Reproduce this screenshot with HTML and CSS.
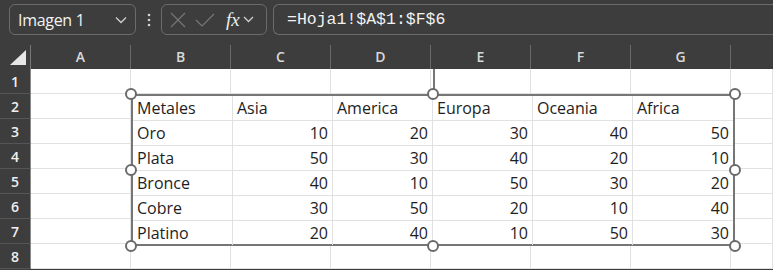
FILE: index.html
```html
<!DOCTYPE html>
<html>
  <head>
    <meta charset="utf-8">
    <title>Imagen 1</title>
    <link rel="stylesheet" href="styles.css">
  </head>
  <body>
    <div class="toolbar">
      <div class="namebox">
        <span class="name">Imagen 1</span>
        <svg class="chev" width="12" height="8" viewBox="0 0 12 8"><path d="M1 1.5 L6 6.5 L11 1.5" fill="none" stroke="#cfcfcf" stroke-width="1.3"/></svg>
      </div>
      <svg class="dots" width="4" height="14" viewBox="0 0 4 14"><circle cx="2" cy="2" r="1.3" fill="#d0d0d0"/><circle cx="2" cy="7" r="1.3" fill="#d0d0d0"/><circle cx="2" cy="12" r="1.3" fill="#d0d0d0"/></svg>
      <div class="fxbox">
        <svg width="16" height="16" viewBox="0 0 16 16"><path d="M1 1 L15 15 M15 1 L1 15" stroke="#777" stroke-width="1.2" fill="none"/></svg>
        <svg width="20" height="14" viewBox="0 0 20 14"><path d="M1 7 L7 13 L19 1" stroke="#777" stroke-width="1.2" fill="none"/></svg>
        <span class="fx">fx</span>
        <svg class="chev" width="11" height="7" viewBox="0 0 11 7"><path d="M1 1 L5.5 5.5 L10 1" fill="none" stroke="#cfcfcf" stroke-width="1.3"/></svg>
      </div>
      <div class="formula">=Hoja1!$A$1:$F$6</div>
    </div>

    <div class="sheet">
      <div class="grid">
        <div class="corner"><svg width="16" height="15" viewBox="0 0 16 15"><path d="M16 0 L16 15 L0 15 Z" fill="#e6e6e6"/></svg></div>
        <div class="colhead">A</div><div class="colhead">B</div><div class="colhead">C</div><div class="colhead">D</div>
        <div class="colhead">E</div><div class="colhead">F</div><div class="colhead">G</div><div class="colhead last"></div>

        <div class="rowhead">1</div><div class="cell"></div><div class="cell"></div><div class="cell"></div><div class="cell"></div><div class="cell"></div><div class="cell"></div><div class="cell"></div><div class="cell"></div>
        <div class="rowhead">2</div><div class="cell"></div><div class="cell"></div><div class="cell"></div><div class="cell"></div><div class="cell"></div><div class="cell"></div><div class="cell"></div><div class="cell"></div>
        <div class="rowhead">3</div><div class="cell"></div><div class="cell"></div><div class="cell"></div><div class="cell"></div><div class="cell"></div><div class="cell"></div><div class="cell"></div><div class="cell"></div>
        <div class="rowhead">4</div><div class="cell"></div><div class="cell"></div><div class="cell"></div><div class="cell"></div><div class="cell"></div><div class="cell"></div><div class="cell"></div><div class="cell"></div>
        <div class="rowhead">5</div><div class="cell"></div><div class="cell"></div><div class="cell"></div><div class="cell"></div><div class="cell"></div><div class="cell"></div><div class="cell"></div><div class="cell"></div>
        <div class="rowhead">6</div><div class="cell"></div><div class="cell"></div><div class="cell"></div><div class="cell"></div><div class="cell"></div><div class="cell"></div><div class="cell"></div><div class="cell"></div>
        <div class="rowhead">7</div><div class="cell"></div><div class="cell"></div><div class="cell"></div><div class="cell"></div><div class="cell"></div><div class="cell"></div><div class="cell"></div><div class="cell"></div>
        <div class="rowhead">8</div><div class="cell"></div><div class="cell"></div><div class="cell"></div><div class="cell"></div><div class="cell"></div><div class="cell"></div><div class="cell"></div><div class="cell"></div>
      </div>

      <div class="picture">
        <div class="rotline"></div>
        <div class="pgrid">
          <div class="pc">Metales</div><div class="pc">Asia</div><div class="pc">America</div><div class="pc">Europa</div><div class="pc">Oceania</div><div class="pc">Africa</div>
          <div class="pc">Oro</div><div class="pc num">10</div><div class="pc num">20</div><div class="pc num">30</div><div class="pc num">40</div><div class="pc num">50</div>
          <div class="pc">Plata</div><div class="pc num">50</div><div class="pc num">30</div><div class="pc num">40</div><div class="pc num">20</div><div class="pc num">10</div>
          <div class="pc">Bronce</div><div class="pc num">40</div><div class="pc num">10</div><div class="pc num">50</div><div class="pc num">30</div><div class="pc num">20</div>
          <div class="pc">Cobre</div><div class="pc num">30</div><div class="pc num">50</div><div class="pc num">20</div><div class="pc num">10</div><div class="pc num">40</div>
          <div class="pc">Platino</div><div class="pc num">20</div><div class="pc num">40</div><div class="pc num">10</div><div class="pc num">50</div><div class="pc num">30</div>
        </div>
        <div class="handle h-tl"></div><div class="handle h-tm"></div><div class="handle h-tr"></div>
        <div class="handle h-ml"></div><div class="handle h-mr"></div>
        <div class="handle h-bl"></div><div class="handle h-bm"></div><div class="handle h-br"></div>
      </div>
    </div>
  </body>
</html>
```

FILE: styles.css
```css
body {
    margin: 0;
    width: 773px;
    height: 270px;
    overflow: hidden;
    background-color: #3d3d3d;
    font-family: "Open Sans", "Noto Sans", sans-serif;
}

.toolbar {
    height: 45px;
    box-sizing: border-box;
    padding: 4px 0 0 9px;
    display: flex;
    align-items: flex-start;
}

.namebox {
    width: 127px;
    height: 31px;
    box-sizing: border-box;
    border: 1px solid #6b6b6b;
    border-radius: 6px;
    display: flex;
    align-items: center;
    justify-content: space-between;
    padding: 0 8px 0 8px;
}

.name {
    color: #f2f2f2;
    font-size: 16px;
    letter-spacing: -0.3px;
}

.dots {
    margin: 9px 10px 0 11px;
}

.fxbox {
    width: 106px;
    height: 31px;
    box-sizing: border-box;
    border: 1px solid #6b6b6b;
    border-radius: 6px;
    display: flex;
    align-items: center;
    padding: 0 4px 0 8px;
    gap: 9px;
}

.fx {
    color: #eeeeee;
    font-family: "Liberation Serif", serif;
    font-style: italic;
    font-size: 19px;
    margin-left: 2px;
    margin-right: -6px;
}

.formula {
    flex: 1;
    margin-left: 6px;
    height: 31px;
    box-sizing: border-box;
    border: 1px solid #6b6b6b;
    border-right: none;
    border-radius: 6px 0 0 6px;
    color: #f2f2f2;
    font-family: "Liberation Mono", monospace;
    font-size: 16.5px;
    line-height: 29px;
    padding-left: 13px;
}

.sheet {
    position: relative;
}

.grid {
    display: grid;
    grid-template-columns: 31px repeat(7, 100px) 42px;
    grid-template-rows: 24px repeat(8, 25px);
}

.corner {
    display: flex;
    align-items: flex-end;
    justify-content: flex-end;
    padding: 0 4px 4px 0;
    border-right: 1px solid #777;
}

.colhead {
    color: #d9d9d9;
    font-size: 14px;
    font-weight: 600;
    text-align: center;
    line-height: 24px;
    border-right: 1px solid #6a6a6a;
    box-sizing: border-box;
}

.colhead.last {
    border-right: none;
}

.rowhead {
    color: #f0f0f0;
    font-size: 14px;
    font-weight: 600;
    text-align: center;
    line-height: 25px;
    background-color: #3d3d3d;
    border-bottom: 1px solid #555;
    border-right: 1px solid #8a8a8a;
    box-sizing: border-box;
}

.cell {
    background-color: #ffffff;
    border-right: 1px solid #e1e1e1;
    border-bottom: 1px solid #e1e1e1;
    box-sizing: border-box;
}

.picture {
    position: absolute;
    left: 131px;
    top: 49px;
    width: 604px;
    height: 152px;
    box-sizing: border-box;
    border: 2px solid #767676;
    background-color: #ffffff;
}

.rotline {
    position: absolute;
    left: 300px;
    top: -27px;
    width: 2px;
    height: 25px;
    background-color: #767676;
}

.pgrid {
    display: grid;
    grid-template-columns: repeat(6, 1fr);
    grid-template-rows: repeat(6, 1fr);
    height: 100%;
}

.pc {
    font-size: 16px;
    color: #1e1e1e;
    line-height: 24px;
    padding: 0 4px 0 4px;
    border-right: 1px solid #e1e1e1;
    border-bottom: 1px solid #e1e1e1;
    box-sizing: border-box;
    white-space: nowrap;
}

.pc:nth-child(6n) {
    border-right: none;
}

.pc:nth-last-child(-n+6) {
    border-bottom: none;
}

.num {
    text-align: right;
}

.handle {
    position: absolute;
    width: 12px;
    height: 12px;
    box-sizing: border-box;
    border: 2px solid #6a6a6a;
    border-radius: 50%;
    background-color: #ffffff;
}

.h-tl { left: -8px; top: -8px; }
.h-tm { left: 294px; top: -8px; }
.h-tr { right: -8px; top: -8px; }
.h-ml { left: -8px; top: 68px; }
.h-mr { right: -8px; top: 68px; }
.h-bl { left: -8px; bottom: -8px; }
.h-bm { left: 294px; bottom: -8px; }
.h-br { right: -8px; bottom: -8px; }
```
